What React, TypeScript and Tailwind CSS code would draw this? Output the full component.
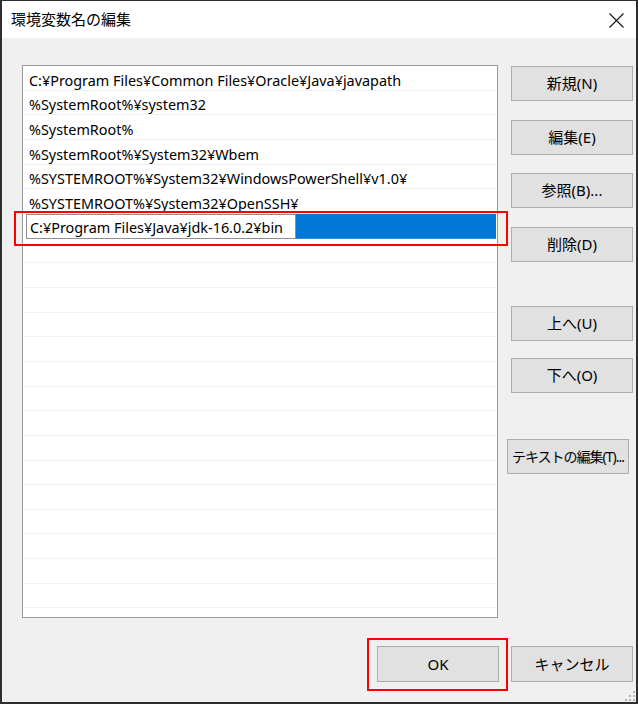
import React from "react";

const rows = [
  "C:¥Program Files¥Common Files¥Oracle¥Java¥javapath",
  "%SystemRoot%¥system32",
  "%SystemRoot%",
  "%SystemRoot%¥System32¥Wbem",
  "%SYSTEMROOT%¥System32¥WindowsPowerShell¥v1.0¥",
  "%SYSTEMROOT%¥System32¥OpenSSH¥",
];

function Btn({ label, className = "" }: { label: string; className?: string }) {
  return (
    <div
      className={`w-[122px] h-[35px] bg-[#e1e1e1] border border-[#adadad] flex items-center justify-center text-[15px] text-black whitespace-nowrap ${className}`}
    >
      {label}
    </div>
  );
}

export default function App() {
  const empty = Array.from({ length: 16 });
  return (
    <div className="relative w-[638px] h-[704px] bg-[#f0f0f0] border-t border-b-2 border-x-2 border-[#2e2e2e] flex flex-col font-['Noto_Sans','Noto_Sans_CJK_JP',sans-serif] text-black overflow-hidden">
      {/* title bar */}
      <div className="h-[37px] shrink-0 bg-white flex items-center justify-between pl-[9px] pr-[12px]">
        <span className="text-[15px] font-['Noto_Sans_CJK_JP',sans-serif] text-[#000]">環境変数名の編集</span>
        <svg width="15" height="15" viewBox="0 0 15 15" className="mt-[2px]">
          <path d="M0.5 0.5 L14.5 14.5 M14.5 0.5 L0.5 14.5" stroke="#111" strokeWidth="1.1" />
        </svg>
      </div>

      {/* body */}
      <div className="flex">
        {/* list */}
        <div className="ml-[20px] mt-[27px] w-[476px] h-[553px] bg-white border border-[#9a9a9a] overflow-hidden flex flex-col">
          {rows.map((r, i) => (
            <div
              key={i}
              className="h-[24.67px] shrink-0 border-b border-[#f0f0f0] flex items-center pl-[6px] pt-[5px] text-[14.4px] whitespace-nowrap"
            >
              {r}
            </div>
          ))}
          <div className="h-[24.67px] shrink-0 flex items-stretch">
            <div className="ml-[3px] w-[270px] bg-white border border-[#8f8f8f] flex items-center pl-[3px] pt-[4px] text-[14.4px] whitespace-nowrap">
              C:¥Program Files¥Java¥jdk-16.0.2¥bin
            </div>
            <div className="flex-1 mr-[1px] bg-[#0078d7] border-b border-[#2a8be0]" />
          </div>
          {empty.map((_, i) => (
            <div key={i} className="h-[24.67px] shrink-0 border-b border-[#f0f0f0]" />
          ))}
        </div>

        {/* right buttons */}
        <div className="ml-[13px] mt-[28px] flex flex-col">
          <Btn label="新規(N)" />
          <Btn label="編集(E)" className="mt-[19px]" />
          <Btn label="参照(B)..." className="mt-[18px]" />
          <Btn label="削除(D)" className="mt-[19px]" />
          <Btn label="上へ(U)" className="mt-[44px]" />
          <Btn label="下へ(O)" className="mt-[17px]" />
          <Btn label="テキストの編集(T)..." className="mt-[46px] ml-[-4px] !text-[14px] tracking-[-1px]" />
        </div>
      </div>

      {/* footer */}
      <div className="flex justify-end gap-[12px] pr-[3px] mt-[28px]">
        <Btn label="OK" className="h-[36px]" />
        <Btn label="キャンセル" className="h-[36px]" />
      </div>

      {/* annotation boxes */}
      <div className="absolute left-[12px] top-[210px] w-[494px] h-[35px] border-2 border-[#ff0000]" />
      <div className="absolute left-[365px] top-[637px] w-[141px] h-[53px] border-2 border-[#ff0000]" />

      {/* resize grip */}
      <svg width="10" height="10" viewBox="0 0 10 10" className="absolute right-[1px] bottom-[1px]">
        <rect x="8" y="0" width="2" height="2" fill="#b8b8b8" />
        <rect x="4" y="4" width="2" height="2" fill="#b8b8b8" />
        <rect x="8" y="4" width="2" height="2" fill="#b8b8b8" />
        <rect x="0" y="8" width="2" height="2" fill="#b8b8b8" />
        <rect x="4" y="8" width="2" height="2" fill="#b8b8b8" />
        <rect x="8" y="8" width="2" height="2" fill="#b8b8b8" />
      </svg>
    </div>
  );
}
